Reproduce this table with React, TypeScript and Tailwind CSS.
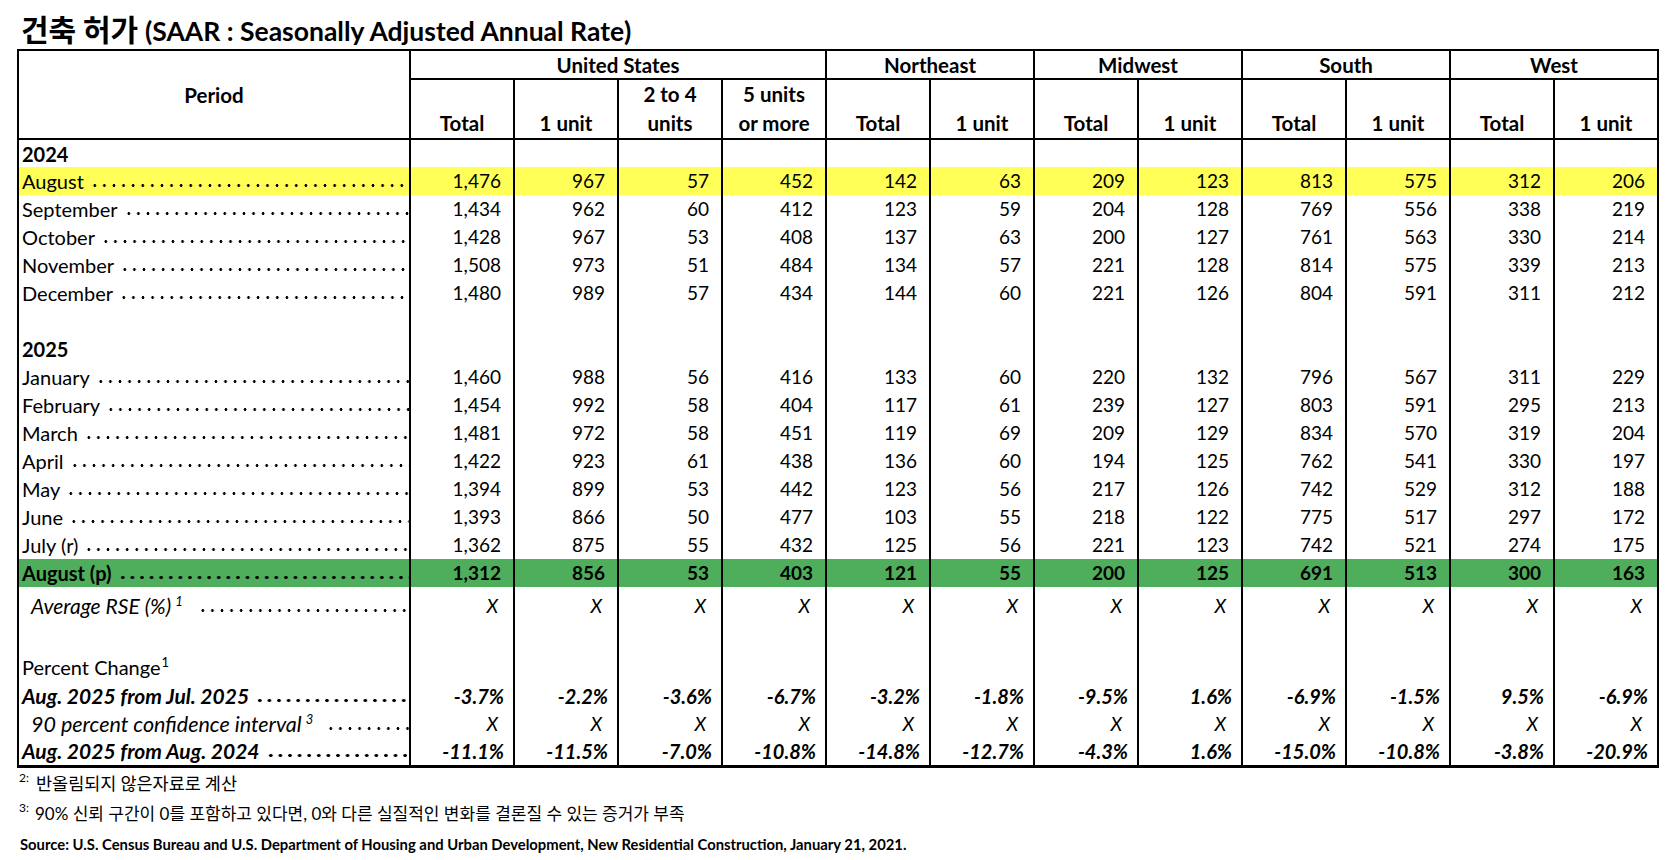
import type { ReactNode } from "react"

// --- Data ---

const X_ROW = Array.from({ length: 12 }, () => "X")

interface MonthRow {
  readonly label: string
  readonly values: readonly string[]
}

const ROWS_2024: readonly MonthRow[] = [
  { label: "September", values: ["1,434", "962", "60", "412", "123", "59", "204", "128", "769", "556", "338", "219"] },
  { label: "October", values: ["1,428", "967", "53", "408", "137", "63", "200", "127", "761", "563", "330", "214"] },
  { label: "November", values: ["1,508", "973", "51", "484", "134", "57", "221", "128", "814", "575", "339", "213"] },
  { label: "December", values: ["1,480", "989", "57", "434", "144", "60", "221", "126", "804", "591", "311", "212"] },
]

const AUGUST_2024 = ["1,476", "967", "57", "452", "142", "63", "209", "123", "813", "575", "312", "206"]

const ROWS_2025: readonly MonthRow[] = [
  { label: "January", values: ["1,460", "988", "56", "416", "133", "60", "220", "132", "796", "567", "311", "229"] },
  { label: "February", values: ["1,454", "992", "58", "404", "117", "61", "239", "127", "803", "591", "295", "213"] },
  { label: "March", values: ["1,481", "972", "58", "451", "119", "69", "209", "129", "834", "570", "319", "204"] },
  { label: "April", values: ["1,422", "923", "61", "438", "136", "60", "194", "125", "762", "541", "330", "197"] },
  { label: "May", values: ["1,394", "899", "53", "442", "123", "56", "217", "126", "742", "529", "312", "188"] },
  { label: "June", values: ["1,393", "866", "50", "477", "103", "55", "218", "122", "775", "517", "297", "172"] },
  { label: "July (r)", values: ["1,362", "875", "55", "432", "125", "56", "221", "123", "742", "521", "274", "175"] },
]

const AUGUST_2025 = ["1,312", "856", "53", "403", "121", "55", "200", "125", "691", "513", "300", "163"]

const CHANGE_MONTH = ["-3.7%", "-2.2%", "-3.6%", "-6.7%", "-3.2%", "-1.8%", "-9.5%", "1.6%", "-6.9%", "-1.5%", "9.5%", "-6.9%"]
const CHANGE_YEAR = ["-11.1%", "-11.5%", "-7.0%", "-10.8%", "-14.8%", "-12.7%", "-4.3%", "1.6%", "-15.0%", "-10.8%", "-3.8%", "-20.9%"]

const REGIONS = ["Northeast", "Midwest", "South", "West"]

// --- Cells ---

function LabelCell({
  children,
  indent = false,
  gap = "ml-[5px]",
  dots = true,
  bold = false,
  size = "text-[20px]",
}: {
  readonly children?: ReactNode
  readonly indent?: boolean
  readonly gap?: string
  readonly dots?: boolean
  readonly bold?: boolean
  readonly size?: string
}) {
  const dotClass = bold
    ? "bg-[radial-gradient(circle,#000_1.5px,transparent_1.9px)]"
    : "bg-[radial-gradient(circle,#000_1.25px,transparent_1.6px)]"
  return (
    <td className={`border-x-2 border-black p-0 ${size} ${indent ? "pl-[12px]" : "pl-[3px]"}`}>
      <div className="flex items-end whitespace-nowrap">
        <span className="shrink-0 pr-[1px]">{children}</span>
        {dots && (
          <span
            className={`${gap} ${dotClass} mb-[4px] h-[5px] min-w-0 flex-1 bg-[length:9.6px_5px] bg-left bg-repeat-x`}
          />
        )}
      </div>
    </td>
  )
}

function ValueCells({ values, pad = "pr-[12px]" }: { readonly values: readonly string[]; readonly pad?: string }) {
  return (
    <>
      {values.map((v, i) => (
        <td key={i} className={`border-x-2 border-black p-0 text-right ${pad}`}>
          {v}
        </td>
      ))}
    </>
  )
}

function EmptyCells() {
  return (
    <>
      {Array.from({ length: 12 }, (_, i) => (
        <td key={i} className="border-x-2 border-black p-0" />
      ))}
    </>
  )
}

function Sup({ children, gap = "ml-[4px]" }: { readonly children: ReactNode; readonly gap?: string }) {
  return <sup className={`relative -top-[8px] ${gap} text-[13px]`}>{children}</sup>
}

// --- Header ---

function TableHeader() {
  const sub = ["Total", "1 unit"]
  return (
    <thead className="text-[20.5px]">
      <tr className="h-[29px]">
        <th rowSpan={2} className="border-2 border-black p-0 align-middle font-bold">
          Period
        </th>
        <th colSpan={4} className="border-2 border-black p-0 align-middle font-bold">
          United States
        </th>
        {REGIONS.map((r) => (
          <th key={r} colSpan={2} className="border-2 border-black p-0 align-middle font-bold">
            {r}
          </th>
        ))}
      </tr>
      <tr className="h-[58px] leading-[29px]">
        <th className="border-2 border-black p-0 align-bottom font-bold">Total</th>
        <th className="border-2 border-black p-0 align-bottom font-bold">1 unit</th>
        <th className="border-2 border-black p-0 align-bottom font-bold">
          <div>2 to 4</div>
          <div>units</div>
        </th>
        <th className="border-2 border-black p-0 align-bottom font-bold">
          <div>5 units</div>
          <div>or more</div>
        </th>
        {REGIONS.map((r) =>
          sub.map((s) => (
            <th key={`${r}-${s}`} className="border-2 border-black p-0 align-bottom font-bold">
              {s}
            </th>
          ))
        )}
      </tr>
    </thead>
  )
}

// --- Main ---

export default function App() {
  return (
    <div className="h-[860px] w-[1680px] bg-white pl-[17px] font-[Lato,'Noto_Sans_CJK_KR',sans-serif] text-black">
      <h1 className="h-[49px] pl-[4px] pt-[11px] text-[26.5px] font-bold leading-[34px]">
        <span className="font-['Noto_Sans_CJK_KR',sans-serif] text-[30px]">건축 허가 </span>
        (SAAR : Seasonally Adjusted Annual Rate)
      </h1>

      <table className="w-[1640px] table-fixed border-collapse border-2 border-b-[3px] border-black text-[19px] leading-[22px]">
        <colgroup>
          <col className="w-[392px]" />
          {Array.from({ length: 12 }, (_, i) => (
            <col key={i} className="w-[104px]" />
          ))}
        </colgroup>
        <TableHeader />
        <tbody>
          <tr className="h-[28px]">
            <LabelCell dots={false}>
              <span className="font-bold">2024</span>
            </LabelCell>
            <EmptyCells />
          </tr>
          <tr className="h-[28px] bg-[#ffff57]">
            <LabelCell>August</LabelCell>
            <ValueCells values={AUGUST_2024} />
          </tr>
          {ROWS_2024.map((r) => (
            <tr key={r.label} className="h-[28px]">
              <LabelCell>{r.label}</LabelCell>
              <ValueCells values={r.values} />
            </tr>
          ))}
          <tr className="h-[28px]">
            <LabelCell dots={false} />
            <EmptyCells />
          </tr>
          <tr className="h-[28px]">
            <LabelCell dots={false}>
              <span className="font-bold">2025</span>
            </LabelCell>
            <EmptyCells />
          </tr>
          {ROWS_2025.map((r) => (
            <tr key={r.label} className="h-[28px]">
              <LabelCell>{r.label}</LabelCell>
              <ValueCells values={r.values} />
            </tr>
          ))}
          <tr className="h-[28px] bg-[#4fae5c] font-bold">
            <LabelCell bold>August (p)</LabelCell>
            <ValueCells values={AUGUST_2025} />
          </tr>
          <tr className="h-[37px] italic">
            <LabelCell indent gap="ml-[14px]" size="text-[21px]">
              Average RSE (%)<Sup>1</Sup>
            </LabelCell>
            <ValueCells values={X_ROW} pad="pr-[15px]" />
          </tr>
          <tr className="h-[28px]">
            <LabelCell dots={false} />
            <EmptyCells />
          </tr>
          <tr className="h-[30px]">
            <LabelCell dots={false}>
              Percent Change<Sup gap="ml-[1px]">1</Sup>
            </LabelCell>
            <EmptyCells />
          </tr>
          <tr className="h-[28px] text-[20px] font-bold italic">
            <LabelCell bold size="text-[21px]">
              Aug. 2025 from Jul. 2025
            </LabelCell>
            <ValueCells values={CHANGE_MONTH} pad="pr-[9px]" />
          </tr>
          <tr className="h-[28px] italic">
            <LabelCell indent gap="ml-[12px]" size="text-[21.5px]">
              90 percent confidence interval<Sup>3</Sup>
            </LabelCell>
            <ValueCells values={X_ROW} pad="pr-[15px]" />
          </tr>
          <tr className="h-[28px] text-[20px] font-bold italic">
            <LabelCell bold size="text-[21px]">
              Aug. 2025 from Aug. 2024
            </LabelCell>
            <ValueCells values={CHANGE_YEAR} pad="pr-[9px]" />
          </tr>
        </tbody>
      </table>

      {/* Footnotes */}
      <div className="mt-[1px] flex h-[30px] items-center pl-[2px] text-[17.5px] font-['Noto_Sans_CJK_KR',sans-serif]">
        <span className="relative -top-[6px] mr-[7px] font-[Lato,sans-serif] text-[12px]">2:</span>
        반올림되지 않은자료로 계산
      </div>
      <div className="flex h-[30px] items-center pl-[2px] text-[17px]">
        <span className="relative -top-[6px] mr-[6px] text-[12px]">3:</span>
        <span>90% 신뢰 구간이 0를 포함하고 있다면, 0와 다른 실질적인 변화를 결론질 수 있는 증거가 부족</span>
      </div>
      <div className="pl-[3px] text-[14.8px] font-bold leading-[30px]">
        Source: U.S. Census Bureau and U.S. Department of Housing and Urban Development, New Residential Construction, January 21, 2021.
      </div>
    </div>
  )
}
